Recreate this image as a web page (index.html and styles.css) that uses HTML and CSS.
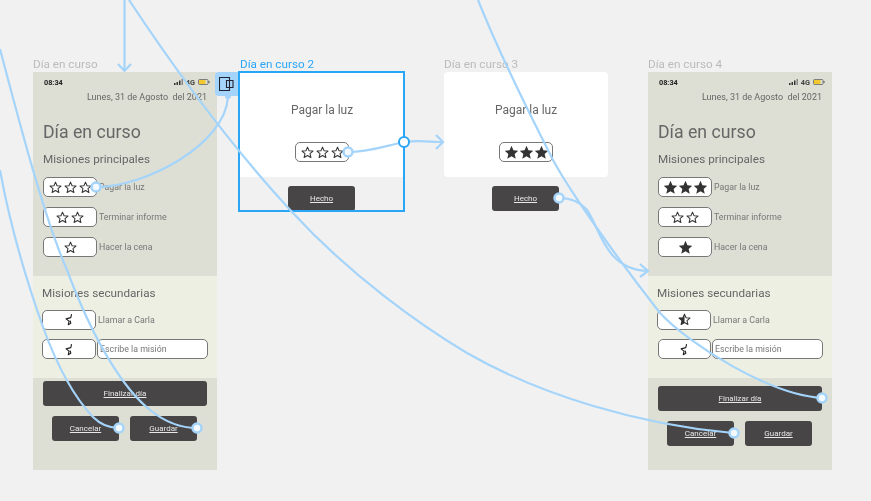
FILE: index.html
```html
<!DOCTYPE html>
<html lang="en">
<head>
    <meta charset="UTF-8">
    <title>Día en curso</title>
    <link rel="stylesheet" href="styles.css">
</head>
<body>
    <!-- shared star shapes -->
    <svg class="defs" width="0" height="0">
        <symbol id="star-o" viewBox="0 0 14 14"><path d="M7 1.200l1.700 3.900 4.200.4-3.200 2.800 1 4.100L7 10.200l-3.700 2.200 1-4.100L1.100 5.500l4.200-.4z" fill="#fff" stroke="#333" stroke-width="1.100" stroke-linejoin="round"/></symbol>
        <symbol id="star-f" viewBox="1 1 12 12"><path d="M7 .8l1.800 4.100 4.500.4-3.400 3 1 4.400L7 10.400l-3.900 2.300 1-4.400-3.400-3 4.500-.4z" fill="#333"/></symbol>
        <symbol id="star-h" viewBox="0 0 14 14"><path d="M7 1.200l1.700 3.900 4.200.4-3.200 2.800 1 4.100L7 10.200l-3.700 2.200 1-4.100L1.100 5.500l4.200-.4z" fill="#fff" stroke="#333" stroke-width="1.100" stroke-linejoin="round"/><path d="M7 1L5.200 5 .8 5.400 4.200 8.400 3.200 12.800 7 10.400z" fill="#333"/></symbol>
        <symbol id="star-b" viewBox="0 0 14 14"><path d="M9.200 1.200L8.400 5 3.300 6.300 6.500 8.800 5.700 12.600 8.400 11 7.700 8.300" fill="none" stroke="#222" stroke-width="1.200" stroke-linejoin="round"/></symbol>
    </svg>

    <div class="frame phone f1">
        <div class="frame-title">Día en curso</div>
        <div class="screen">
            <section class="main">
                <div class="status">
                    <span class="time">08:34</span>
                    <svg class="signal" width="9" height="6" viewBox="0 0 9 6"><path d="M0 4h1.500v2H0zM2.500 3H4v3H2.500zM5 1.500h1.500V6H5z" fill="#333"/><path d="M7.500 0H9v6H7.500z" fill="#888"/></svg>
                    <span class="net">4G</span>
                    <svg class="battery" width="12" height="6" viewBox="0 0 12 6"><rect x=".5" y=".5" width="9.500" height="5" rx="1" fill="none" stroke="#555" stroke-width=".7"/><rect x="1" y="1" width="6.500" height="4" fill="#f2c830"/><rect x="10.500" y="2" width="1" height="2" fill="#555"/></svg>
                </div>
                <div class="date">Lunes, 31 de Agosto&nbsp; del 2021</div>
                <h1>Día en curso</h1>
                <h2>Misiones principales</h2>
                <div class="row">
                    <div class="stars"><svg><use href="#star-o"/></svg><svg><use href="#star-o"/></svg><svg><use href="#star-o"/></svg></div>
                    <span class="label">Pagar la luz</span>
                </div>
                <div class="row">
                    <div class="stars"><svg><use href="#star-o"/></svg><svg><use href="#star-o"/></svg></div>
                    <span class="label">Terminar informe</span>
                </div>
                <div class="row">
                    <div class="stars"><svg><use href="#star-o"/></svg></div>
                    <span class="label">Hacer la cena</span>
                </div>
            </section>
            <section class="side">
                <h2>Misiones secundarias</h2>
                <div class="row">
                    <div class="stars"><svg><use href="#star-b"/></svg></div>
                    <span class="label">Llamar a Carla</span>
                </div>
                <div class="row">
                    <div class="stars"><svg><use href="#star-b"/></svg></div>
                    <div class="field">Escribe la misión</div>
                </div>
            </section>
            <section class="actions">
                <a class="btn btn-wide">Finalizar día</a>
                <div class="btn-row">
                    <a class="btn">Cancelar</a>
                    <a class="btn">Guardar</a>
                </div>
            </section>
        </div>
    </div>

    <div class="frame dialog selected f2">
        <div class="frame-title">Día en curso 2</div>
        <div class="card">
            <p>Pagar la luz</p>
            <div class="stars"><svg><use href="#star-o"/></svg><svg><use href="#star-o"/></svg><svg><use href="#star-o"/></svg></div>
        </div>
        <a class="btn">Hecho</a>
    </div>

    <div class="frame dialog f3">
        <div class="frame-title">Día en curso 3</div>
        <div class="card">
            <p>Pagar la luz</p>
            <div class="stars"><svg><use href="#star-f"/></svg><svg><use href="#star-f"/></svg><svg><use href="#star-f"/></svg></div>
        </div>
        <a class="btn">Hecho</a>
    </div>

    <div class="frame phone late f4">
        <div class="frame-title">Día en curso 4</div>
        <div class="screen">
            <section class="main">
                <div class="status">
                    <span class="time">08:34</span>
                    <svg class="signal" width="9" height="6" viewBox="0 0 9 6"><path d="M0 4h1.500v2H0zM2.500 3H4v3H2.500zM5 1.500h1.500V6H5z" fill="#333"/><path d="M7.500 0H9v6H7.500z" fill="#888"/></svg>
                    <span class="net">4G</span>
                    <svg class="battery" width="12" height="6" viewBox="0 0 12 6"><rect x=".5" y=".5" width="9.500" height="5" rx="1" fill="none" stroke="#555" stroke-width=".7"/><rect x="1" y="1" width="6.500" height="4" fill="#f2c830"/><rect x="10.500" y="2" width="1" height="2" fill="#555"/></svg>
                </div>
                <div class="date">Lunes, 31 de Agosto&nbsp; del 2021</div>
                <h1>Día en curso</h1>
                <h2>Misiones principales</h2>
                <div class="row">
                    <div class="stars"><svg><use href="#star-f"/></svg><svg><use href="#star-f"/></svg><svg><use href="#star-f"/></svg></div>
                    <span class="label">Pagar la luz</span>
                </div>
                <div class="row">
                    <div class="stars"><svg><use href="#star-o"/></svg><svg><use href="#star-o"/></svg></div>
                    <span class="label">Terminar informe</span>
                </div>
                <div class="row">
                    <div class="stars"><svg><use href="#star-f"/></svg></div>
                    <span class="label">Hacer la cena</span>
                </div>
            </section>
            <section class="side">
                <h2>Misiones secundarias</h2>
                <div class="row">
                    <div class="stars"><svg><use href="#star-h"/></svg></div>
                    <span class="label">Llamar a Carla</span>
                </div>
                <div class="row">
                    <div class="stars"><svg><use href="#star-b"/></svg></div>
                    <div class="field">Escribe la misión</div>
                </div>
            </section>
            <section class="actions">
                <a class="btn btn-wide">Finalizar día</a>
                <div class="btn-row">
                    <a class="btn">Cancelar</a>
                    <a class="btn">Guardar</a>
                </div>
            </section>
        </div>
    </div>

    <!-- prototype tab on the first frame -->
    <div class="proto-tab">
        <svg width="16" height="15" viewBox="0 0 16 15"><path d="M.5.5h10v13H.5zM7.500 3.500h6.500v7H7.500z" fill="none" stroke="#223" stroke-width="1.100"/></svg>
    </div>

    <!-- prototype wires -->
    <svg class="wires" width="871" height="501" viewBox="0 0 871 501">
        <g fill="none" stroke="#a5d4fa" stroke-width="2.200">
            <path d="M124.500 0V71M118 64l6.500 7 6.500-7"/>
            <path d="M0 49C20 125 45 220 67 270C95 345 125 390 150 410C165 422 180 428 197 428"/>
            <path d="M0 170C10 225 28 285 43 327C55 360 72 395 93 417C100 424 110 428 119 428"/>
            <path d="M129 0C170 62 230 145 292 212C350 275 420 325 467 353C540 395 640 425 733 433"/>
            <path d="M478 0C500 55 530 115 553 160C572 195 620 262 660 313C690 345 770 395 822 398"/>
            <path d="M559 198C572 198 580 202 587 210C600 228 605 270 648 271M640 264l8 7-8 6"/>
            <path d="M96 187C145 187 225 145 228 97"/>
            <path d="M348 152C370 152 385 146 404 142C420 140 430 142 443 142M436 135l7 7-7 7"/>
        </g>
        <circle cx="228" cy="96" r="3" fill="#a5d4fa"/>
        <g fill="#f4faff" stroke="#a5d4fa" stroke-width="2.500">
            <circle cx="96" cy="187" r="4.500"/>
            <circle cx="119" cy="428" r="4.500"/>
            <circle cx="197" cy="428" r="4.500"/>
            <circle cx="348" cy="152" r="4.500"/>
            <circle cx="559" cy="198" r="4.500"/>
            <circle cx="734" cy="433" r="4.500"/>
            <circle cx="822" cy="398" r="4.500"/>
        </g>
        <circle cx="404" cy="142" r="5" fill="#fff" stroke="#2aa6f7" stroke-width="2"/>
    </svg>
</body>
</html>
```

FILE: styles.css
```css
* {
    box-sizing: border-box;
}

body {
    margin: 0;
    width: 871px;
    height: 501px;
    position: relative;
    overflow: hidden;
    background: #f1f1f1;
    font-family: Roboto, "Liberation Sans", sans-serif;
    color: #666;
}

.defs {
    position: absolute;
}

/* frames sit on a free canvas */
.frame {
    position: absolute;
    top: 72px;
    will-change: transform;
}
.f1 { left: 33px; }
.f2 { left: 240px; }
.f3 { left: 444px; }
.f4 { left: 648px; }

.frame-title {
    position: absolute;
    top: -15px;
    left: 0;
    font-size: 11.700px;
    line-height: 14px;
    color: #bbb;
    white-space: nowrap;
}

/* phone frames */
.screen {
    width: 184px;
    height: 398px;
    display: flex;
    flex-direction: column;
    background: #dddfd4;
}

.main {
    height: 204px;
    padding: 0 10px;
}

.status {
    display: flex;
    align-items: center;
    height: 20px;
    padding-left: 1px;
    margin-right: -3px;
    gap: 2px;
    color: #222;
    font-weight: 700;
    font-size: 7.300px;
}
.status .time {
    margin-right: auto;
}
.status .net {
    margin: 0 1px;
    color: #444;
}

.date {
    text-align: right;
    font-size: 9px;
    line-height: 12px;
    margin-top: -1px;
    color: #666;
}

h1 {
    margin: 18px 0 0;
    font-size: 17.700px;
    line-height: 22px;
    font-weight: 400;
    color: #666;
}

h2 {
    margin: 0;
    font-size: 11.700px;
    line-height: 16px;
    font-weight: 400;
    color: #666;
}

.main h2 {
    margin: 8px 0 10px;
}

.row {
    display: flex;
    align-items: center;
    height: 20px;
    margin-bottom: 10px;
}

.stars {
    width: 54px;
    height: 20px;
    flex: none;
    display: flex;
    justify-content: center;
    align-items: center;
    gap: 2px;
    background: #fff;
    border: 1px solid #777;
    border-radius: 5px;
}
.stars svg {
    width: 13px;
    height: 13px;
}

.label {
    margin-left: 2px;
    font-size: 8.800px;
    color: #777;
}

.side {
    height: 102px;
    padding: 9px 9px 0;
    background: #edefe3;
}
.side h2 {
    margin-bottom: 8.500px;
}
.side .row {
    margin-bottom: 9.500px;
}

.field {
    flex: 1;
    height: 20px;
    margin-left: 1px;
    padding-left: 2px;
    line-height: 18px;
    font-size: 8.800px;
    color: #777;
    background: #fff;
    border: 1px solid #777;
    border-radius: 5px;
}

.actions {
    padding: 3px 10px 0;
}

.btn {
    display: flex;
    align-items: center;
    justify-content: center;
    height: 25px;
    font-size: 8px;
    color: #e8e8e8;
    text-decoration: underline;
    background: #484546;
    border-radius: 3px;
}

.btn-wide {
    width: 164px;
}

.btn-row {
    display: flex;
    gap: 11px;
    margin: 10px 0 0 9px;
}
.btn-row .btn {
    width: 67px;
}

/* fourth frame has its buttons a little lower and the rows a pixel in */
.late .actions {
    padding-top: 8px;
}
.late .side .row:last-child .stars {
    margin-left: 1px;
    width: 53px;
}

/* small dialog frames */
.dialog {
    width: 164px;
}

.card {
    height: 105px;
    display: flex;
    flex-direction: column;
    align-items: center;
    background: #fff;
    border-radius: 4px;
}
.card p {
    margin: 30px 0 0;
    font-size: 12px;
    line-height: 16px;
    color: #666;
}
.card .stars {
    margin-top: 24px;
}

.dialog .btn {
    width: 67px;
    margin: 9px 0 0 48px;
}

.selected .card {
    border-radius: 0;
}
.selected::after {
    content: "";
    position: absolute;
    inset: -1px -1px -1px -2px;
    border: 2px solid #2aa6f7;
}
.selected .frame-title {
    color: #2aa6f7;
}

.proto-tab {
    position: absolute;
    left: 215px;
    top: 72px;
    width: 23px;
    height: 24px;
    display: flex;
    align-items: center;
    justify-content: center;
    background: #a5d4fa;
    border-radius: 4px 0 0 4px;
}

.wires {
    position: absolute;
    top: 0;
    left: 0;
    pointer-events: none;
}
```
